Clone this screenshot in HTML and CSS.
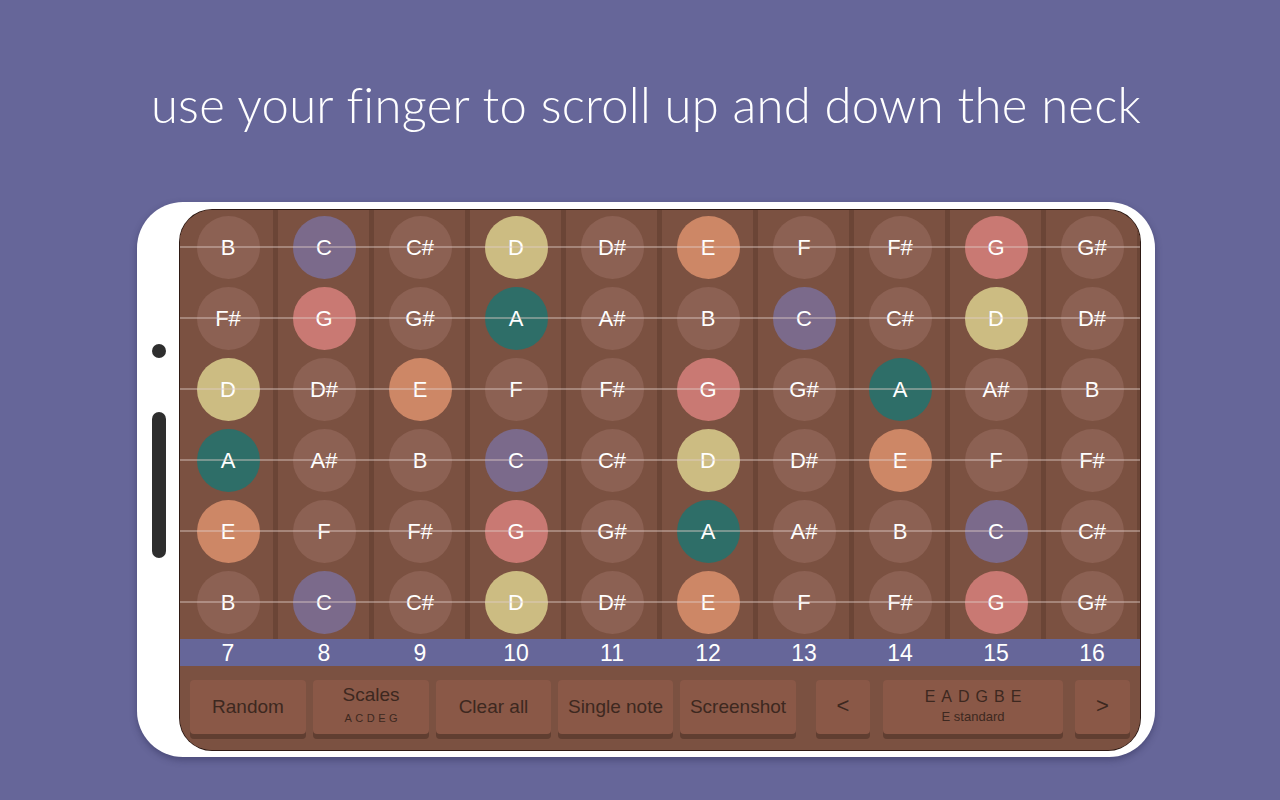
FILE: index.html
```html
<!DOCTYPE html>
<html>
<head>
<meta charset="utf-8">
<link rel="stylesheet" href="styles.css">
</head>
<body>
<div class="page">
  <h1 class="title">use your finger to scroll up and down the neck</h1>
  <div class="phone">
    <div class="bezel">
      <span class="camera"></span>
      <span class="side-button"></span>
    </div>
    <div class="screen">
      <div class="fretboard">
        <div class="string">
          <div class="cell"><span class="note">B</span></div>
          <div class="cell"><span class="note c">C</span></div>
          <div class="cell"><span class="note">C#</span></div>
          <div class="cell"><span class="note d">D</span></div>
          <div class="cell"><span class="note">D#</span></div>
          <div class="cell"><span class="note e">E</span></div>
          <div class="cell"><span class="note">F</span></div>
          <div class="cell"><span class="note">F#</span></div>
          <div class="cell"><span class="note g">G</span></div>
          <div class="cell"><span class="note">G#</span></div>
        </div>
        <div class="string">
          <div class="cell"><span class="note">F#</span></div>
          <div class="cell"><span class="note g">G</span></div>
          <div class="cell"><span class="note">G#</span></div>
          <div class="cell"><span class="note a">A</span></div>
          <div class="cell"><span class="note">A#</span></div>
          <div class="cell"><span class="note">B</span></div>
          <div class="cell"><span class="note c">C</span></div>
          <div class="cell"><span class="note">C#</span></div>
          <div class="cell"><span class="note d">D</span></div>
          <div class="cell"><span class="note">D#</span></div>
        </div>
        <div class="string">
          <div class="cell"><span class="note d">D</span></div>
          <div class="cell"><span class="note">D#</span></div>
          <div class="cell"><span class="note e">E</span></div>
          <div class="cell"><span class="note">F</span></div>
          <div class="cell"><span class="note">F#</span></div>
          <div class="cell"><span class="note g">G</span></div>
          <div class="cell"><span class="note">G#</span></div>
          <div class="cell"><span class="note a">A</span></div>
          <div class="cell"><span class="note">A#</span></div>
          <div class="cell"><span class="note">B</span></div>
        </div>
        <div class="string">
          <div class="cell"><span class="note a">A</span></div>
          <div class="cell"><span class="note">A#</span></div>
          <div class="cell"><span class="note">B</span></div>
          <div class="cell"><span class="note c">C</span></div>
          <div class="cell"><span class="note">C#</span></div>
          <div class="cell"><span class="note d">D</span></div>
          <div class="cell"><span class="note">D#</span></div>
          <div class="cell"><span class="note e">E</span></div>
          <div class="cell"><span class="note">F</span></div>
          <div class="cell"><span class="note">F#</span></div>
        </div>
        <div class="string">
          <div class="cell"><span class="note e">E</span></div>
          <div class="cell"><span class="note">F</span></div>
          <div class="cell"><span class="note">F#</span></div>
          <div class="cell"><span class="note g">G</span></div>
          <div class="cell"><span class="note">G#</span></div>
          <div class="cell"><span class="note a">A</span></div>
          <div class="cell"><span class="note">A#</span></div>
          <div class="cell"><span class="note">B</span></div>
          <div class="cell"><span class="note c">C</span></div>
          <div class="cell"><span class="note">C#</span></div>
        </div>
        <div class="string">
          <div class="cell"><span class="note">B</span></div>
          <div class="cell"><span class="note c">C</span></div>
          <div class="cell"><span class="note">C#</span></div>
          <div class="cell"><span class="note d">D</span></div>
          <div class="cell"><span class="note">D#</span></div>
          <div class="cell"><span class="note e">E</span></div>
          <div class="cell"><span class="note">F</span></div>
          <div class="cell"><span class="note">F#</span></div>
          <div class="cell"><span class="note g">G</span></div>
          <div class="cell"><span class="note">G#</span></div>
        </div>
      </div>
      <div class="fret-numbers">
        <span>7</span><span>8</span><span>9</span><span>10</span><span>11</span>
        <span>12</span><span>13</span><span>14</span><span>15</span><span>16</span>
      </div>
      <div class="controls">
        <div class="btn w116">Random</div>
        <div class="btn w116 stacked"><span class="btn-main">Scales</span><span class="btn-sub">ACDEG</span></div>
        <div class="btn w115">Clear all</div>
        <div class="btn w115">Single note</div>
        <div class="btn w116">Screenshot</div>
        <div class="btn arrow prev">&lt;</div>
        <div class="btn tuning stacked"><span class="tuning-main">EADGBE</span><span class="tuning-sub">E standard</span></div>
        <div class="btn arrow next">&gt;</div>
      </div>
    </div>
  </div>
</div>
</body>
</html>
```
FILE: styles.css
```css
html, body {
  margin: 0;
  padding: 0;
}
body {
  background: #666699;
  width: 1280px;
  height: 800px;
  overflow: hidden;
  font-family: "Liberation Sans", Arial, sans-serif;
}
.page {
  display: flex;
  flex-direction: column;
}
.title {
  margin: 0;
  height: 202px;
  box-sizing: border-box;
  padding: 75px 0 0 12px;
  font-family: Lato, "Open Sans", sans-serif;
  font-weight: 300;
  font-size: 49px;
  line-height: 59px;
  color: #ffffff;
  text-align: center;
  letter-spacing: 0.25px;
}
.phone {
  margin-left: 137px;
  width: 1018px;
  height: 555px;
  box-sizing: border-box;
  padding: 8px 15px 7px 0;
  background: #ffffff;
  border-radius: 46px;
  display: flex;
  box-shadow: 0 3px 7px rgba(40, 40, 80, 0.45);
}
.bezel {
  width: 43px;
  flex: none;
  display: flex;
  flex-direction: column;
  align-items: center;
  padding-top: 134px;
}
.camera {
  width: 14px;
  height: 14px;
  border-radius: 50%;
  background: #2e2e2e;
}
.side-button {
  margin-top: 54px;
  width: 14px;
  height: 146px;
  border-radius: 7px;
  background: #2e2e2e;
}
.screen {
  width: 960px;
  height: 540px;
  border-radius: 32px;
  overflow: hidden;
  background: #7b5141;
  box-shadow: 0 0 0 1px #2e1a14;
  display: flex;
  flex-direction: column;
}
.fretboard {
  padding: 2px 0 1px;
  background:
    linear-gradient(90deg, #7b5141 0 2px, transparent 2px) no-repeat,
    repeating-linear-gradient(90deg, #6b4536 0 2px, transparent 2px 93px, #6b4536 93px 96px),
    #7b5141;
}
.string {
  position: relative;
  display: grid;
  grid-template-columns: repeat(10, 96px);
  height: 71px;
}
.string::after {
  content: "";
  position: absolute;
  left: 0;
  right: 0;
  top: 34px;
  height: 2px;
  background: rgba(225, 205, 200, 0.42);
}
.cell {
  display: flex;
  align-items: center;
  justify-content: center;
}
.note {
  width: 63px;
  height: 63px;
  border-radius: 50%;
  background: #8c6153;
  color: #ffffff;
  font-size: 22px;
  line-height: 63px;
  text-align: center;
}
.note.c { background: #7b6a8b; }
.note.d { background: #ccbc82; }
.note.e { background: #cd8766; }
.note.g { background: #c97973; }
.note.a { background: #2e6e68; }
.fret-numbers {
  height: 27px;
  background: #666699;
  display: grid;
  grid-template-columns: repeat(10, 96px);
}
.fret-numbers span {
  color: #ffffff;
  font-size: 23px;
  line-height: 28px;
  text-align: center;
}
.controls {
  flex: 1;
  display: flex;
  align-items: flex-start;
  gap: 7px;
  padding: 14px 10px 0;
  background: #7b5141;
}
.btn {
  height: 54px;
  box-sizing: border-box;
  border-radius: 4px;
  background: #8a5847;
  box-shadow: 0 5px 0 #603e31;
  color: #3d2820;
  font-size: 19px;
  display: flex;
  align-items: center;
  justify-content: center;
  white-space: nowrap;
  flex: none;
}
.w116 { width: 116px; }
.w115 { width: 115px; }
.stacked {
  flex-direction: column;
}
.btn-main {
  font-size: 19px;
  line-height: 22px;
  margin-top: -6px;
}
.btn-sub {
  font-size: 11px;
  letter-spacing: 3.5px;
  margin-right: -3.5px;
  line-height: 14px;
  margin-top: 5px;
}
.arrow {
  font-size: 22px;
  padding-bottom: 2px;
}
.prev {
  width: 54px;
  margin-left: 13px;
}
.tuning {
  width: 180px;
  margin-left: 6px;
}
.next {
  width: 55px;
  margin-left: 5px;
}
.tuning-main {
  font-size: 16px;
  letter-spacing: 6px;
  margin-right: -6px;
  line-height: 18px;
  margin-top: -2px;
}
.tuning-sub {
  font-size: 13px;
  line-height: 16px;
  margin-top: 3px;
}
```
